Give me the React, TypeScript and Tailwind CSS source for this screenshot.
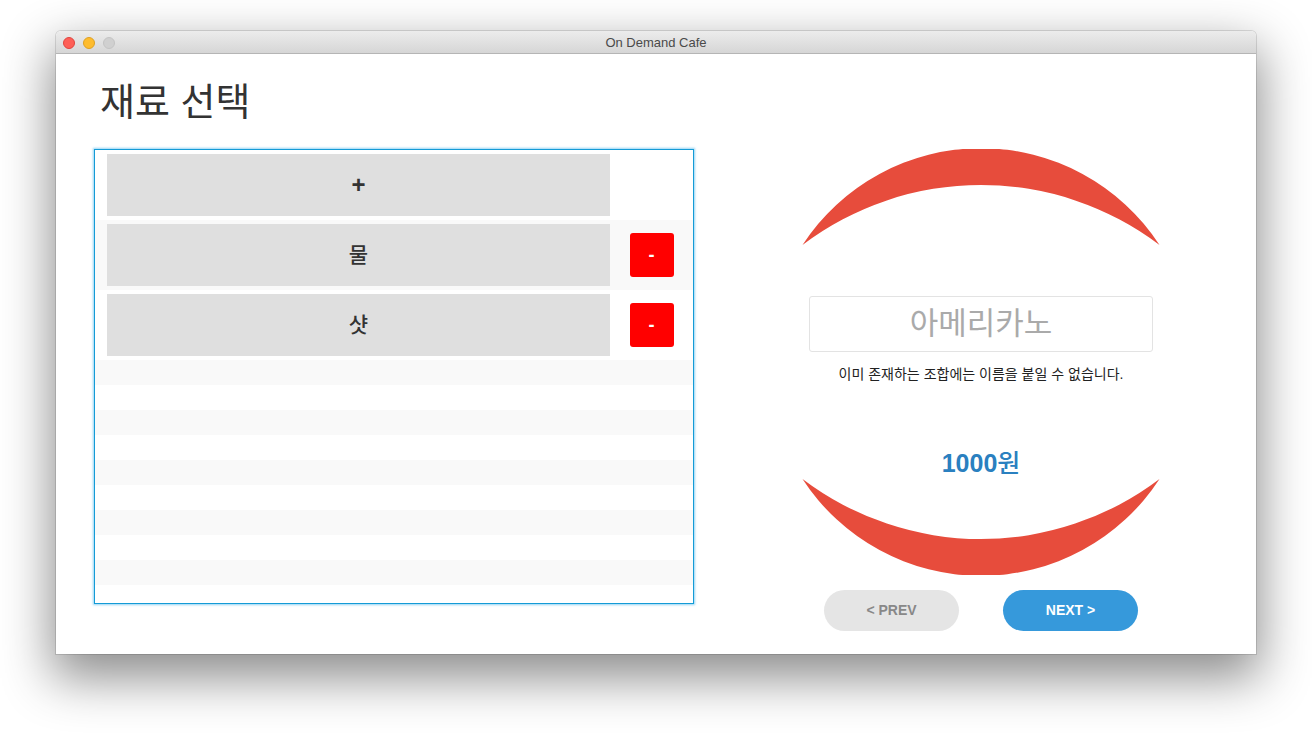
import React from "react";

const KR = "font-['Liberation_Sans','Noto_Sans_CJK_KR',sans-serif]";

function Row({ label, removable, striped, bold }: { label: string; removable: boolean; striped: boolean; bold?: boolean }) {
  return (
    <div className={`flex h-[70px] items-center pl-[12px] ${striped ? "bg-[#f9f9f9]" : "bg-white"}`}>
      <div
        className={`flex h-[62px] w-[503px] items-center justify-center bg-[#dfdfdf] text-[#333] ${
          bold ? "text-[24px] font-bold" : "text-[21px] font-medium"
        }`}
      >
        {label}
      </div>
      <div className="flex flex-1 justify-center">
        {removable && (
          <div className="flex h-[44px] w-[44px] items-center justify-center rounded-[3px] bg-[#ff0000] text-[18px] font-bold text-white">
            -
          </div>
        )}
      </div>
    </div>
  );
}

export default function App() {
  const empty = Array.from({ length: 10 });
  return (
    <div className={`h-[734px] w-[1312px] overflow-hidden bg-white pl-[56px] pt-[31px] ${KR}`}>
      <div className="w-[1200px] overflow-hidden rounded-t-[5px] shadow-[0_20px_50px_4px_rgba(0,0,0,0.45),0_0_0_1px_rgba(0,0,0,0.12)]">
        {/* title bar */}
        <div className="grid h-[23px] grid-cols-[1fr_auto_1fr] items-center border-b border-[#b5b5b5] bg-gradient-to-b from-[#ececec] to-[#d6d6d6] pt-[2px]">
          <div className="flex items-center gap-[8px] pl-[7px]">
            <span className="h-[12px] w-[12px] rounded-full border border-[#e0443e] bg-[#fe5f57]" />
            <span className="h-[12px] w-[12px] rounded-full border border-[#dea123] bg-[#febc2e]" />
            <span className="h-[12px] w-[12px] rounded-full border border-[#c4c4c4] bg-[#d0d0d0]" />
          </div>
          <div className="text-[13px] text-[#4a4a4a] font-['Liberation_Sans',sans-serif]">On Demand Cafe</div>
          <div />
        </div>

        {/* content */}
        <div className="h-[600px] bg-white">
          <h1 className="pl-[44px] pt-[29px] text-[38px] leading-[38px] text-[#333]">재료 선택</h1>

          <div className="mt-[28px] flex pl-[38px]">
            {/* list box */}
            <div className="h-[455px] w-[600px] overflow-hidden border border-[#149bd6] shadow-[0_0_2px_1px_rgba(60,175,235,0.55)]">
              <Row label="+" removable={false} striped={false} bold />
              <Row label="물" removable={true} striped={true} />
              <Row label="샷" removable={true} striped={false} />
              {empty.map((_, i) => (
                <div key={i} className={`h-[25px] ${i % 2 === 0 ? "bg-[#f9f9f9]" : "bg-white"}`} />
              ))}
            </div>

            {/* right column */}
            <div className="ml-[74px] flex w-[426px] flex-col items-center">
              <div className="relative h-[426px] w-[426px]">
                <svg className="absolute inset-0" width="426" height="426" viewBox="0 0 426 426">
                  <path d="M34.5,96 A213,213 0 0 1 391.5,96 A295.5,295.5 0 0 0 34.5,96 Z" fill="#e74c3c" />
                  <path d="M34.5,330 A213,213 0 0 0 391.5,330 A295.5,295.5 0 0 1 34.5,330 Z" fill="#e74c3c" />
                </svg>
                <div className="relative flex flex-col items-center pt-[147px]">
                  <input
                    readOnly
                    placeholder="아메리카노"
                    className={`h-[56px] w-[344px] rounded-[3px] border border-[#e3e3e3] bg-white text-center text-[31px] text-[#aaa] outline-none placeholder:text-[#aaa] ${KR}`}
                  />
                  <div className="mt-[13px] text-[14px] leading-[18px] text-[#222]">
                    이미 존재하는 조합에는 이름을 붙일 수 없습니다.
                  </div>
                  <div className="mt-[65px] text-[25px] leading-[30px] text-[#2a80c0]">
                    <span className="font-bold">1000</span>
                    <span className="font-medium">원</span>
                  </div>
                </div>
              </div>
              <div className="mt-[15px] flex gap-[44px] font-['Liberation_Sans',sans-serif]">
                <div className="flex h-[41px] w-[135px] items-center justify-center rounded-full bg-[#e5e5e5] text-[14px] font-bold text-[#888]">
                  &lt; PREV
                </div>
                <div className="flex h-[41px] w-[135px] items-center justify-center rounded-full bg-[#3699db] text-[14px] font-bold text-white">
                  NEXT &gt;
                </div>
              </div>
            </div>
          </div>
        </div>
      </div>
    </div>
  );
}
